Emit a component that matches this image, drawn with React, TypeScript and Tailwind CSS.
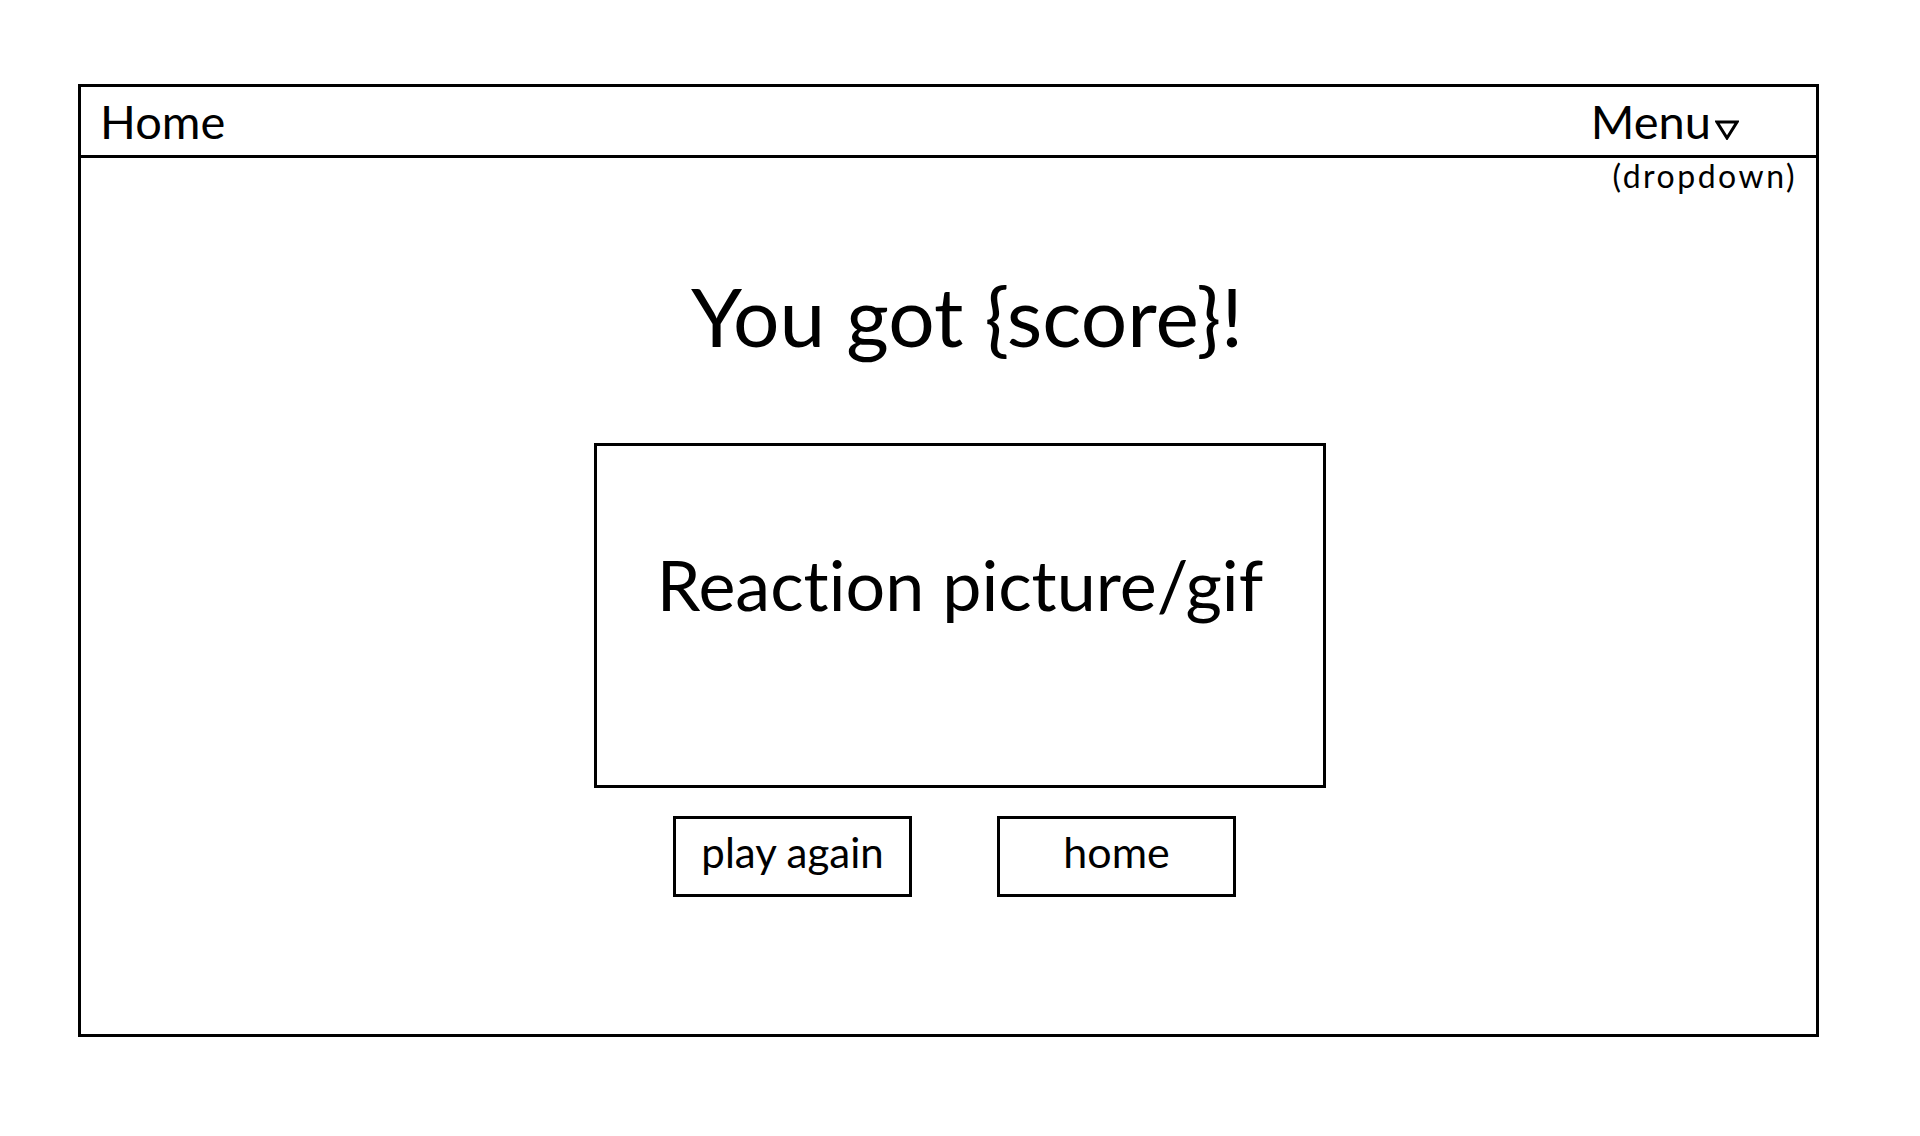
import React from 'react';

const font = { fontFamily: 'Lato, "Open Sans", sans-serif' };

const Triangle: React.FC = () => (
  <svg width="24" height="20" viewBox="0 0 24 20" className="ml-[4px] mb-[5px]">
    <polygon points="2,2 22,2 12,18" fill="none" stroke="black" strokeWidth="3" strokeLinejoin="miter" />
  </svg>
);

const Button: React.FC<{ label: string; size: string; pad: string }> = ({ label, size, pad }) => (
  <button className={`w-[239px] h-[81px] border-[3px] border-black bg-white flex justify-center items-start leading-none text-black ${size} ${pad}`}>
    {label}
  </button>
);

const App: React.FC = () => {
  return (
    <div className="min-h-screen bg-white pt-[84px] pl-[78px] text-black [font-variant-ligatures:none]" style={font}>
      <div className="w-[1741px] h-[953px] border-[3px] border-black flex flex-col">
        <header className="h-[71px] shrink-0 border-b-[3px] border-black flex items-center justify-between pl-[19px] pr-[77px]">
          <span className="text-[47px] leading-none">Home</span>
          <span className="flex items-end text-[47px] leading-none">
            Menu
            <Triangle />
          </span>
        </header>

        <div className="flex justify-end pr-[19px] mt-[2px]">
          <span className="text-[32px] leading-none tracking-[2.5px]">(dropdown)</span>
        </div>

        <main className="flex flex-col items-center pl-[23px]">
          <h1 className="mt-[82px] ml-[14px] text-[82px] leading-none font-normal">You got {'{score}'}!</h1>

          <div className="mt-[87px] w-[732px] h-[345px] border-[3px] border-black flex justify-center items-start pt-[103px]">
            <p className="text-[70px] leading-none">Reaction picture/gif</p>
          </div>

          <div className="mt-[28px] mr-[11px] flex gap-[85px]">
            <Button label="play again" size="text-[42px]" pad="pt-[12px]" />
            <Button label="home" size="text-[43px]" pad="pt-[11px]" />
          </div>
        </main>
      </div>
    </div>
  );
};

export default App;
